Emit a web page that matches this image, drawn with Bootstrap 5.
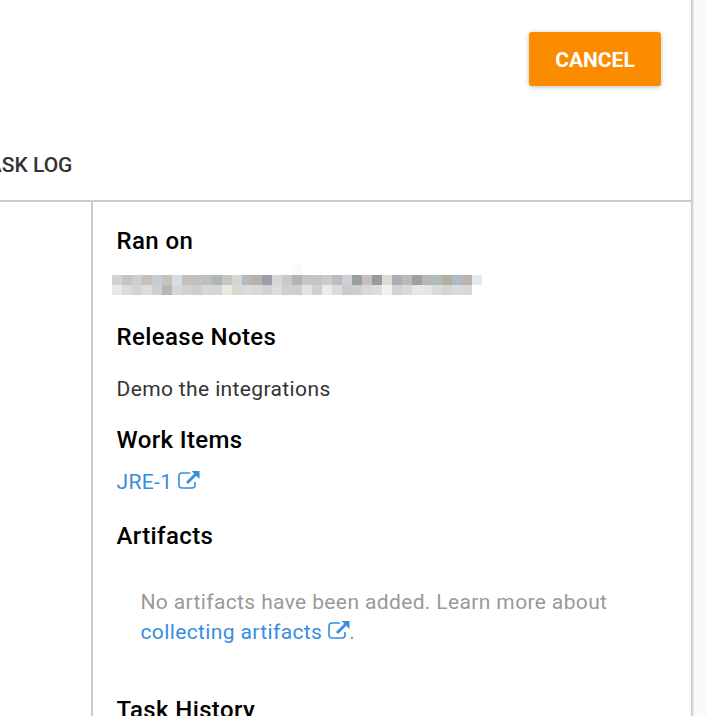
<!DOCTYPE html>
<html lang="en">
<head>
<meta charset="utf-8">
<meta name="viewport" content="width=device-width, initial-scale=1">
<title>Task details</title>
<link href="https://cdn.jsdelivr.net/npm/bootstrap@5.3.0/dist/css/bootstrap.min.css" rel="stylesheet">
<style>
body{font-family:Roboto,sans-serif;background:#fafafa;height:716px;overflow:hidden;color:#333}
.panel{width:692px;height:716px;border-right:1px solid #c8c8c8;box-shadow:1px 0 2px rgba(0,0,0,.2)}
.topbar{height:132px;padding:32px 30px 0 0}
.btn-cancel,.btn-cancel:hover{width:132px;height:54px;background:#fb8c00;color:#fff;border:0;border-radius:3px;font-size:21px;font-weight:700;box-shadow:0 1px 5px rgba(0,0,0,.25);padding:3px 0 0}
.tabs{height:70px;border-bottom:2px solid #ccc}
.tab-log{margin-left:-24px;font-size:21px;font-weight:500;line-height:30px;padding-top:18px;white-space:nowrap}
.side{width:91px}
.detail{border-left:2px solid #ccc;padding-left:23.5px;height:514px;overflow:hidden}
.detail h2{font-size:24px;font-weight:500;line-height:30px;letter-spacing:.38px;color:#000;margin:0}
.body-text{font-size:21px;line-height:30px;letter-spacing:.37px;margin:0}
.ext{color:#368ede;text-decoration:none}
.ext svg{position:relative;top:-3px;margin:0 -.5px 0 0}
.muted{color:#999}
.redacted{display:grid;grid-template-columns:repeat(37,10px);grid-auto-rows:10px;margin:9px 0 0 -4.5px}
</style>
</head>
<body>
<main class="panel bg-white">
  <header class="topbar d-flex justify-content-end align-items-start">
    <button class="btn btn-cancel" type="button">CANCEL</button>
  </header>
  <nav class="tabs d-flex"><div class="tab-log">TASK LOG</div></nav>
  <div class="d-flex">
    <div class="side flex-shrink-0"></div>
    <section class="detail flex-grow-1">
      <h2 style="padding-top:24px">Ran on</h2>
      <div class="redacted" id="redacted"></div>
      <h2 style="padding-top:27px">Release Notes</h2>
      <p class="body-text" style="padding-top:22px">Demo the integrations</p>
      <h2 style="padding-top:21px">Work Items</h2>
      <p class="body-text" style="padding-top:12px"><a class="ext" href="#">JRE-1 <svg width="22" height="20" viewBox="0 0 22 20" fill="none" stroke="currentColor" stroke-width="1.6"><path d="M12 3H4Q1 3 1 6V15Q1 18 4 18H14Q17 18 17 15V12"/><path d="M9 13L18 4" stroke-width="2.8"/><path d="M13.5 1H21.5V9Z" fill="currentColor" stroke="none"/></svg></a></p>
      <h2 style="padding-top:24px">Artifacts</h2>
      <p class="body-text muted ps-4" style="padding-top:36px">No artifacts have been added. Learn more about<br><a class="ext" href="#">collecting artifacts <svg width="22" height="20" viewBox="0 0 22 20" fill="none" stroke="currentColor" stroke-width="1.6"><path d="M12 3H4Q1 3 1 6V15Q1 18 4 18H14Q17 18 17 15V12"/><path d="M9 13L18 4" stroke-width="2.8"/><path d="M13.5 1H21.5V9Z" fill="currentColor" stroke="none"/></svg></a>.</p>
      <h2 style="padding-top:48px">Task History</h2>
    </section>
  </div>
</main>
<script src="https://cdn.jsdelivr.net/npm/bootstrap@5.3.0/dist/js/bootstrap.bundle.min.js"></script>
<script>
const blank = 'fff ';
const rows = [
 blank.repeat(18) + 'fafafa ' + blank.repeat(18),
 'd2d2d0 c1c6c7 cececc c6bfbf c6cbcf c5c2bd d5dde1 c2c1bc c0c1c1 bcbfbf b0b5b8 c8c5be d4d5d5 b3babc b9b1a8 9e9ca8 d5d7d6 c9c8ca b6b2b4 c2c4c5 c3c6c4 cecac9 b9bfc0 d0cfd3 999e9e c4c0bd 969b9e dcdbd4 abafb5 bdbab4 a0a0a2 b6b7b7 b2bdba b2afa7 aebbc4 b9b3b1 e3e9ed',
 'ebe9e7 dadbdd d2d3d4 e1d9da cfd0d4 b9b6b0 d3d7d8 d2d1cf cecece d7d6d8 d5d5d7 e9e9e4 dbd7d3 dadbdd d8d8d4 d1d0d8 dcdcdc cfcfd0 cfcecf e2e3e3 cfd1d0 edebe9 d9dbdb cccacc cdcfcf d8dad9 dcdcde f4f0ef cfd3d5 d9d9d9 e8e7e8 e5e5e5 d8dbd9 d5d4d1 d4dbe1 d6d8d9 fff'
];
const box = document.getElementById('redacted');
rows.forEach(r => r.trim().split(' ').forEach(c => {
  const cell = document.createElement('i');
  cell.style.background = '#' + c;
  box.append(cell);
}));
</script>
</body>
</html>
